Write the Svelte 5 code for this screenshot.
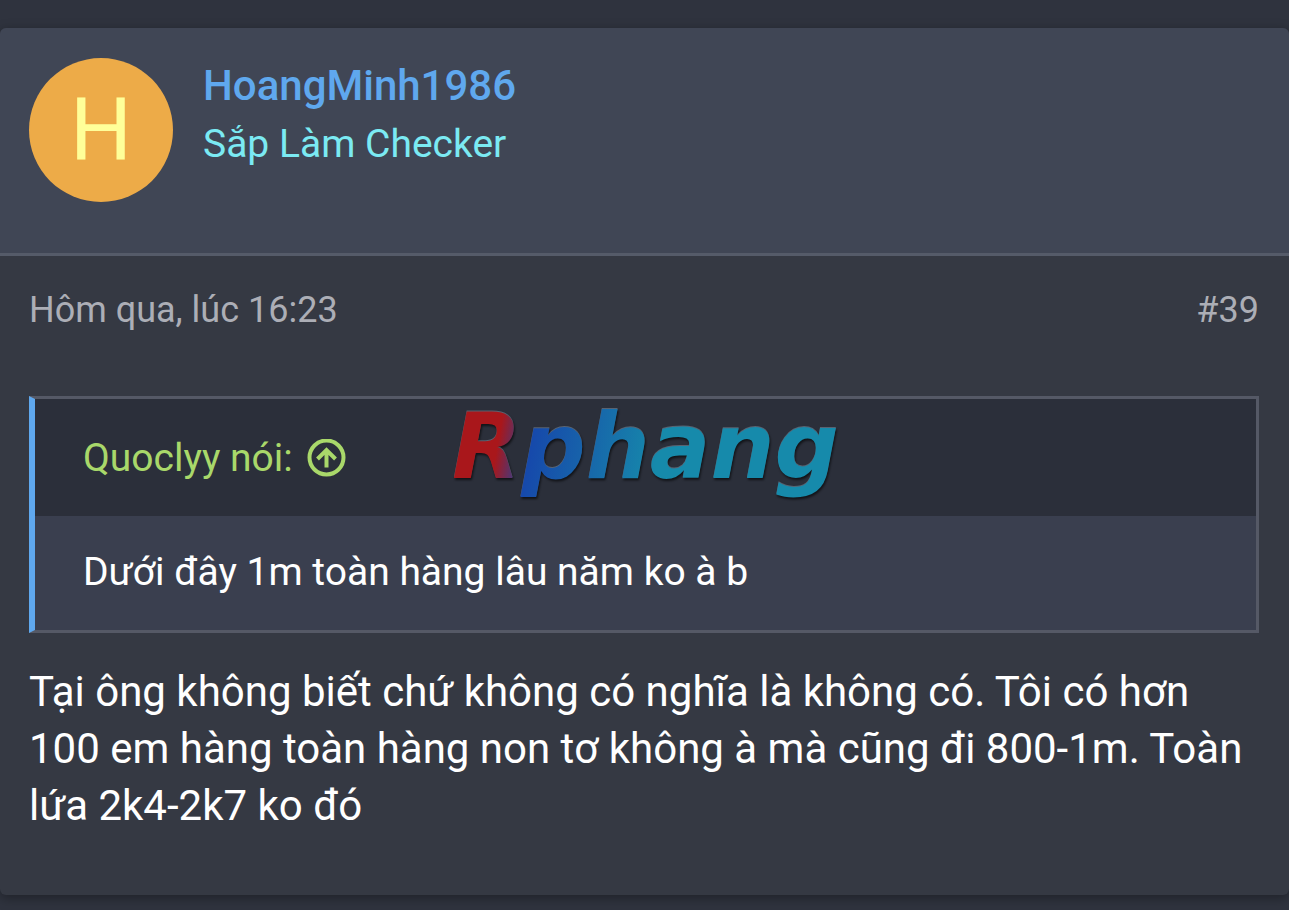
<script>
  const author = { name: 'HoangMinh1986', title: 'Sắp Làm Checker', initial: 'H' };
  const post = {
    date: 'Hôm qua, lúc 16:23',
    number: '#39',
    text: 'Tại ông không biết chứ không có nghĩa là không có. Tôi có hơn 100 em hàng toàn hàng non tơ không à mà cũng đi 800-1m. Toàn lứa 2k4-2k7 ko đó'
  };
  const quote = { by: 'Quoclyy nói:', text: 'Dưới đây 1m toàn hàng lâu năm ko à b' };
</script>

<main>
  <article class="post">
    <header class="user">
      <a class="avatar" href="#member">{author.initial}</a>
      <div class="who">
        <a class="name" href="#member">{author.name}</a>
        <span class="title">{author.title}</span>
      </div>
    </header>
    <div class="body">
      <div class="meta">
        <a href="#post"><time>{post.date}</time></a>
        <a href="#post">{post.number}</a>
      </div>
      <blockquote>
        <a class="source" href="#quoted">
          <span>{quote.by}</span>
          <svg viewBox="0 0 39 39" aria-hidden="true">
            <circle cx="19.5" cy="18.5" r="17" />
            <path d="M19.5 28.500V11.500M10.500 20L19.500 11L28.500 20" />
          </svg>
        </a>
        <p class="quoted">{quote.text}</p>
        <span class="brand">Rphang</span>
      </blockquote>
      <p class="text">{post.text}</p>
    </div>
  </article>
</main>

<style>
  :global(body) {
    margin: 0;
    background: #2f333e;
  }
  main {
    padding: 28px 0 15px;
    font-family: Roboto, sans-serif;
    overflow: hidden;
  }
  a {
    color: inherit;
    text-decoration: none;
  }
  p,
  blockquote {
    margin: 0;
  }
  .post {
    background: #353943;
    border-radius: 6px;
    box-shadow: 0 3px 12px rgba(0, 0, 0, 0.35);
  }
  .user {
    display: flex;
    gap: 30px;
    padding: 30px 30px 51px 29px;
    background: #404655;
    border-bottom: 3px solid #555b69;
    border-radius: 6px 6px 0 0;
  }
  .avatar {
    display: grid;
    place-items: center;
    width: 144px;
    height: 144px;
    border-radius: 50%;
    background: #edab48;
    color: #ffff99;
    font-size: 87px;
    line-height: 144px;
  }
  .who {
    display: flex;
    flex-direction: column;
  }
  .name {
    color: #5fa8ee;
    font-size: 42px;
    font-weight: 500;
    line-height: 56px;
  }
  .title {
    color: #7beaf3;
    font-size: 39px;
    line-height: 60px;
  }
  .body {
    padding: 24px 30px 61px 29px;
  }
  .meta {
    display: flex;
    justify-content: space-between;
    color: #acaeb6;
    font-size: 36px;
    line-height: 60px;
  }
  blockquote {
    position: relative;
    margin-top: 56px;
    background: #3a3f4f;
    border: 3px solid #555966;
    border-left: 6px solid #5fa8ee;
  }
  .source {
    display: flex;
    align-items: center;
    gap: 14px;
    padding: 31px 48px 29px;
    background: #2b2f3a;
    color: #a9d86a;
    font-size: 39px;
    line-height: 57px;
  }
  .source svg {
    width: 39px;
    height: 39px;
    fill: none;
    stroke: currentColor;
    stroke-width: 4;
  }
  .quoted {
    padding: 28px 48px 29px;
    color: #fff;
    font-size: 39px;
    line-height: 57px;
  }
  .brand {
    position: absolute;
    top: -4px;
    left: 417px;
    padding-right: 12px;
    background: linear-gradient(100deg, #a9171b 13%, #1649ab 21%, #1763aa 34%, #168aab 52%);
    background-clip: text;
    color: transparent;
    font: italic bold 90px/104px 'DejaVu Sans', sans-serif;
    filter: drop-shadow(0 -1px 0 rgba(160, 180, 200, 0.4)) drop-shadow(1px 2px 1px rgba(0, 0, 0, 0.6));
    pointer-events: none;
  }
  .text {
    margin-top: 30px;
    color: #fff;
    font-size: 42px;
    line-height: 57px;
  }
</style>
